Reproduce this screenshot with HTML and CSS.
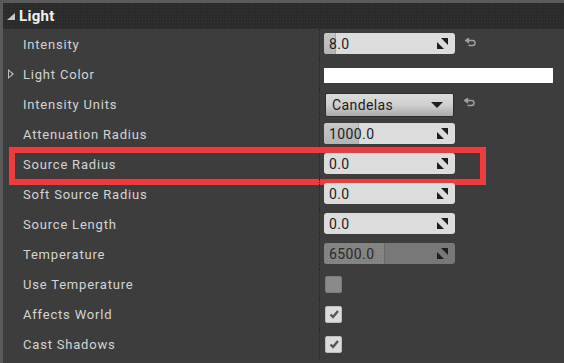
FILE: index.html
```html
<!DOCTYPE html>
<html lang="en">
<head>
    <meta charset="UTF-8">
    <title>Light Details</title>
    <link rel="stylesheet" href="styles.css">
</head>
<body>
    <div class="panel">
        <div class="header">
            <span class="collapse"></span>
            <span class="title">Light</span>
        </div>

        <div class="row">
            <div class="label">Intensity</div>
            <div class="value">
                <div class="field"><span class="fill" style="width: 11px"></span><span class="num">8.0</span>
                    <svg class="spin" viewBox="0 0 11 11"><polygon points="4,0 11,0 11,7"/><polygon points="0,4 0,11 7,11"/></svg>
                </div>
                <svg class="reset" viewBox="0 0 11 10"><path d="M3 2.5 H7.5 A2.5 2.5 0 0 1 7.5 7.5 H3.5"/><polygon points="0.5,2.5 3.5,0.5 3.5,4.5"/></svg>
            </div>
        </div>

        <div class="row">
            <div class="label"><span class="expand"></span>Light Color</div>
            <div class="value">
                <div class="swatch"></div>
            </div>
        </div>

        <div class="row">
            <div class="label">Intensity Units</div>
            <div class="value">
                <div class="combo"><span>Candelas</span><span class="arrow"></span></div>
                <svg class="reset" viewBox="0 0 11 10"><path d="M3 2.5 H7.5 A2.5 2.5 0 0 1 7.5 7.5 H3.5"/><polygon points="0.5,2.5 3.5,0.5 3.5,4.5"/></svg>
            </div>
        </div>

        <div class="row">
            <div class="label">Attenuation Radius</div>
            <div class="value">
                <div class="field"><span class="fill" style="width: 34px"></span><span class="num">1000.0</span>
                    <svg class="spin" viewBox="0 0 11 11"><polygon points="4,0 11,0 11,7"/><polygon points="0,4 0,11 7,11"/></svg>
                </div>
            </div>
        </div>

        <div class="row marked">
            <div class="label">Source Radius</div>
            <div class="value">
                <div class="field"><span class="num">0.0</span>
                    <svg class="spin" viewBox="0 0 11 11"><polygon points="4,0 11,0 11,7"/><polygon points="0,4 0,11 7,11"/></svg>
                </div>
            </div>
            <div class="highlight"></div>
        </div>

        <div class="row">
            <div class="label">Soft Source Radius</div>
            <div class="value">
                <div class="field"><span class="num">0.0</span>
                    <svg class="spin" viewBox="0 0 11 11"><polygon points="4,0 11,0 11,7"/><polygon points="0,4 0,11 7,11"/></svg>
                </div>
            </div>
        </div>

        <div class="row">
            <div class="label">Source Length</div>
            <div class="value">
                <div class="field"><span class="num">0.0</span>
                    <svg class="spin" viewBox="0 0 11 11"><polygon points="4,0 11,0 11,7"/><polygon points="0,4 0,11 7,11"/></svg>
                </div>
            </div>
        </div>

        <div class="row">
            <div class="label">Temperature</div>
            <div class="value">
                <div class="field disabled"><span class="fill" style="width: 60px"></span><span class="num">6500.0</span>
                    <svg class="spin" viewBox="0 0 11 11"><polygon points="4,0 11,0 11,7"/><polygon points="0,4 0,11 7,11"/></svg>
                </div>
            </div>
        </div>

        <div class="row">
            <div class="label">Use Temperature</div>
            <div class="value">
                <div class="check off"></div>
            </div>
        </div>

        <div class="row">
            <div class="label">Affects World</div>
            <div class="value">
                <div class="check"><svg viewBox="0 0 12 12"><path d="M2.5 6.5 L5 9 L10 3"/></svg></div>
            </div>
        </div>

        <div class="row">
            <div class="label">Cast Shadows</div>
            <div class="value">
                <div class="check"><svg viewBox="0 0 12 12"><path d="M2.5 6.5 L5 9 L10 3"/></svg></div>
            </div>
        </div>
    </div>
</body>
</html>
```

FILE: styles.css
```css
html, body {
    margin: 0;
    height: 100%;
    overflow: hidden;
}

body {
    background: #3d3d3d;
    font-family: Roboto, 'Noto Sans', sans-serif;
    font-size: 13px;
    color: #d4d4d4;
}

.panel {
    height: 100%;
    border-top: 3px solid #5a5a5a;
    border-left: 3px solid #5a5a5a;
    box-sizing: border-box;
}

.header {
    height: 26px;
    background-color: #2b2b2b;
    background-image: radial-gradient(#363636 0.6px, transparent 0.8px);
    background-size: 3px 3px;
    display: flex;
    align-items: center;
    padding-left: 4px;
}

.collapse {
    width: 0;
    height: 0;
    border-left: 8px solid transparent;
    border-bottom: 7px solid #c8c8c8;
    margin-right: 4px;
    margin-top: 1px;
}

.title {
    color: #f0f0f0;
    font-weight: bold;
    font-size: 15px;
    letter-spacing: 0.3px;
}

.row {
    height: 30px;
    display: flex;
    position: relative;
}

.label {
    width: 296px;
    padding-left: 20px;
    display: flex;
    align-items: center;
    letter-spacing: 0.8px;
    position: relative;
}

.expand {
    position: absolute;
    left: 5px;
    top: 10px;
    width: 0;
    height: 0;
    border-top: 5px solid transparent;
    border-bottom: 5px solid transparent;
    border-left: 6px solid #bdbdbd;
}

.expand::after {
    content: '';
    position: absolute;
    left: -5px;
    top: -3px;
    border-top: 3px solid transparent;
    border-bottom: 3px solid transparent;
    border-left: 3.5px solid #3d3d3d;
}

.value {
    flex: 1;
    display: flex;
    align-items: center;
    padding-left: 4px;
    border-left: 1px dotted #262626;
}

.field {
    width: 131px;
    height: 21px;
    margin-top: -1px;
    background: #dcdcdc;
    border-radius: 3px;
    display: flex;
    align-items: center;
    position: relative;
    overflow: hidden;
    color: #1c1c1c;
    font-size: 14px;
}

.fill {
    position: absolute;
    left: 0;
    top: 0;
    bottom: 0;
    background: linear-gradient(#c8c8c8, #b4b4b4);
    border-right: 1px solid #a8a8a8;
}

.num {
    position: relative;
    padding-left: 5px;
    letter-spacing: 0.4px;
}

.spin {
    width: 11px;
    height: 11px;
    margin-left: auto;
    margin-right: 7px;
    fill: #1e1e1e;
    position: relative;
}

.field.disabled {
    background: #787878;
    color: #2a2a2a;
}

.field.disabled .fill {
    background-color: #828282;
    background-image: radial-gradient(#8e8e8e 0.6px, transparent 0.8px);
    background-size: 3px 3px;
    border-right: 1px solid #6a6a6a;
}

.reset {
    width: 11px;
    height: 10px;
    margin-left: 10px;
    margin-top: -2px;
    fill: #a0a0a0;
    stroke: #a0a0a0;
    stroke-width: 1.4;
}

.reset path {
    fill: none;
}

.swatch {
    width: 229px;
    height: 15px;
    margin-top: 2px;
    background: #ffffff;
}

.combo {
    width: 129px;
    height: 24px;
    box-sizing: border-box;
    margin-left: 1px;
    margin-top: 1px;
    border: 1px solid #2c2c2c;
    border-radius: 2px;
    background: linear-gradient(#dcdcdc 0%, #cfcfcf 50%, #a9a9a9 100%);
    display: flex;
    align-items: center;
    padding-left: 6px;
    color: #1c1c1c;
    font-size: 14px;
    letter-spacing: 0.4px;
}

.arrow {
    margin-left: auto;
    margin-right: 10px;
    width: 0;
    height: 0;
    border-left: 6px solid transparent;
    border-right: 6px solid transparent;
    border-top: 6px solid #1e1e1e;
}

.check {
    width: 17px;
    height: 17px;
    margin-left: 1px;
    border-radius: 2px;
    background: #dcdcdc;
    border: 1px solid #bdbdbd;
    box-sizing: border-box;
    display: flex;
    align-items: center;
    justify-content: center;
}

.check svg {
    width: 12px;
    height: 12px;
    fill: none;
    stroke: #555555;
    stroke-width: 2.4;
}

.check.off {
    background: #8a8a8a;
    border-color: #7c7c7c;
}

.highlight {
    position: absolute;
    left: 6px;
    top: -2px;
    width: 477px;
    height: 38px;
    border: 6px solid #ef3b3b;
    box-sizing: border-box;
    pointer-events: none;
}
```
